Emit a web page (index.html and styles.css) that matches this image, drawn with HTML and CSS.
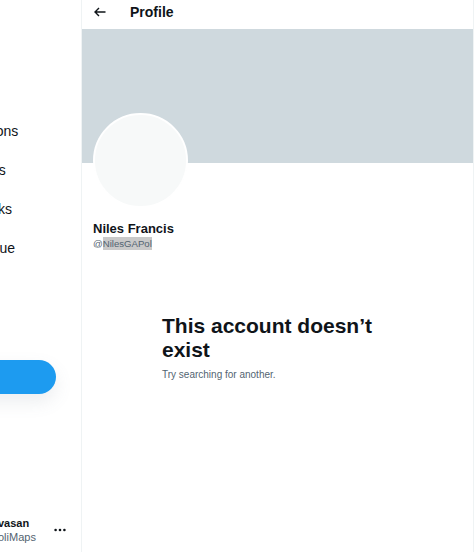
FILE: index.html
```html
<!DOCTYPE html>
<html lang="en">
<head>
<meta charset="utf-8">
<title>Profile</title>
<link rel="stylesheet" href="styles.css">
</head>
<body>
<div class="app">
  <aside class="sidebar">
    <nav class="nav">
      <div class="nav-item">Notifications</div>
      <div class="nav-item">Messages</div>
      <div class="nav-item">Bookmarks</div>
      <div class="nav-item">Twitter Blue</div>
    </nav>
    <div class="tweet-btn"></div>
    <div class="account">
      <div class="account-text">
        <div class="account-name">vasan</div>
        <div class="account-handle">oliMaps</div>
      </div>
      <svg class="more" width="12" height="4" viewBox="0 0 12 4"><circle cx="1.6" cy="2" r="1.3"/><circle cx="6" cy="2" r="1.3"/><circle cx="10.4" cy="2" r="1.3"/></svg>
    </div>
  </aside>
  <main class="main">
    <header class="header">
      <svg class="back" width="12" height="10" viewBox="0 0 12 10"><path d="M11.5 5H1.2M5 1 1 5l4 4" fill="none" stroke="#0f1419" stroke-width="1.4"/></svg>
      <h1 class="title">Profile</h1>
    </header>
    <div class="banner"></div>
    <div class="profile">
      <div class="avatar"></div>
      <div class="name">Niles Francis</div>
      <div class="handle">@<span class="sel">NilesGAPol</span></div>
    </div>
    <section class="empty">
      <h2 class="empty-title">This account doesn’t exist</h2>
      <p class="empty-sub">Try searching for another.</p>
    </section>
  </main>
</div>
</body>
</html>
```
FILE: styles.css
```css
* { box-sizing: border-box; }
html, body { margin: 0; padding: 0; background: #fff; }
body { font-family: "Liberation Sans", Arial, sans-serif; color: #0f1419; }
.app { display: flex; height: 552px; overflow: hidden; }
.sidebar {
  width: 82px; flex: none; border-right: 1px solid #eff3f4;
  display: flex; flex-direction: column; overflow: hidden;
}
.nav { padding-top: 112px; }
.nav-item {
  height: 39px; line-height: 39px; font-size: 14px; white-space: nowrap;
  margin-left: -58px; color: #0f1419;
}
.tweet-btn {
  margin-top: 92px; margin-left: -144px; width: 200px; height: 34px;
  border-radius: 17px; background: #1d9bf0;
  box-shadow: 0 8px 18px rgba(101, 119, 134, 0.12);
}
.account {
  margin-top: auto; height: 44px; margin-bottom: 0;
  display: flex; align-items: center; gap: 20px;
}
.account-text { margin-left: -2px; width: 36px; }
.account-name { font-size: 11px; font-weight: bold; line-height: 14px; color: #0f1419; }
.account-handle { font-size: 11px; line-height: 14px; color: #536471; }
.more { fill: #0f1419; }
.main { width: 392px; flex: none; border-right: 1px solid #eff3f4; }
.header {
  height: 29px; display: flex; align-items: center;
  padding-left: 12px; padding-bottom: 5px;
}
.back { display: block; margin-right: 24px; }
.title { margin: 0; font-size: 14px; font-weight: bold; line-height: 18px; }
.banner { height: 134px; background: #cfd9de; }
.profile { padding-left: 11px; }
.avatar {
  width: 95px; height: 95px; margin-top: -50px; border-radius: 50%;
  background: #f7f9f9; border: 2px solid #fff;
}
.name { margin-top: 13px; font-size: 13px; font-weight: bold; line-height: 16px; }
.handle { font-size: 9.6px; line-height: 14px; color: #536471; }
.sel { background: #c9c9c9; padding: 1px 0; }
.empty { margin-top: 63px; padding-left: 80px; width: 320px; }
.empty-title { margin: 0; font-size: 21px; font-weight: bold; line-height: 24px; }
.empty-sub { margin: 7px 0 0; font-size: 10px; line-height: 12px; color: #536471; }
```
